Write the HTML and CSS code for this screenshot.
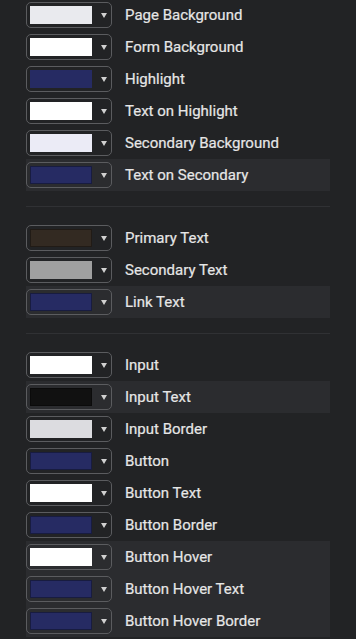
FILE: index.html
```html
<!DOCTYPE html>
<html lang="en">
<head>
    <meta charset="UTF-8">
    <title>Colors</title>
    <link rel="stylesheet" href="styles.css">
</head>
<body>
<div class="panel">
    <div class="group">
        <div class="row"><div class="picker"><span class="swatch" style="background:#e9eaee"></span><span class="caret"></span></div><span class="label">Page Background</span></div>
        <div class="row"><div class="picker"><span class="swatch" style="background:#ffffff"></span><span class="caret"></span></div><span class="label">Form Background</span></div>
        <div class="row"><div class="picker"><span class="swatch" style="background:#262b63"></span><span class="caret"></span></div><span class="label">Highlight</span></div>
        <div class="row"><div class="picker"><span class="swatch" style="background:#ffffff"></span><span class="caret"></span></div><span class="label">Text on Highlight</span></div>
        <div class="row"><div class="picker"><span class="swatch" style="background:#ebebf6"></span><span class="caret"></span></div><span class="label">Secondary Background</span></div>
        <div class="row active"><div class="picker"><span class="swatch edged" style="background:#262b63"></span><span class="caret"></span></div><span class="label">Text on Secondary</span></div>
    </div>
    <hr class="sep">
    <div class="group">
        <div class="row"><div class="picker"><span class="swatch edged" style="background:#332a22"></span><span class="caret"></span></div><span class="label">Primary Text</span></div>
        <div class="row"><div class="picker"><span class="swatch" style="background:#a0a0a0"></span><span class="caret"></span></div><span class="label">Secondary Text</span></div>
        <div class="row active"><div class="picker"><span class="swatch edged" style="background:#262b63"></span><span class="caret"></span></div><span class="label">Link Text</span></div>
    </div>
    <hr class="sep">
    <div class="group">
        <div class="row"><div class="picker"><span class="swatch" style="background:#ffffff"></span><span class="caret"></span></div><span class="label">Input</span></div>
        <div class="row active"><div class="picker"><span class="swatch edged" style="background:#111111"></span><span class="caret"></span></div><span class="label">Input Text</span></div>
        <div class="row"><div class="picker"><span class="swatch" style="background:#dcdce0"></span><span class="caret"></span></div><span class="label">Input Border</span></div>
        <div class="row"><div class="picker"><span class="swatch edged" style="background:#262b63"></span><span class="caret"></span></div><span class="label">Button</span></div>
        <div class="row"><div class="picker"><span class="swatch" style="background:#ffffff"></span><span class="caret"></span></div><span class="label">Button Text</span></div>
        <div class="row"><div class="picker"><span class="swatch edged" style="background:#262b63"></span><span class="caret"></span></div><span class="label">Button Border</span></div>
        <div class="row active"><div class="picker"><span class="swatch" style="background:#ffffff"></span><span class="caret"></span></div><span class="label">Button Hover</span></div>
        <div class="row active"><div class="picker"><span class="swatch edged" style="background:#262b63"></span><span class="caret"></span></div><span class="label">Button Hover Text</span></div>
        <div class="row active"><div class="picker"><span class="swatch edged" style="background:#262b63"></span><span class="caret"></span></div><span class="label">Button Hover Border</span></div>
    </div>
</div>
</body>
</html>
```

FILE: styles.css
```css
html, body{
    margin: 0;
    background-color: #222325;
}
.panel{
    width: 304px;
    margin: -1px 0 0 26px;
    font-family: Roboto, "Liberation Sans", Arial, sans-serif;
}
.row{
    display: flex;
    align-items: center;
    gap: 13px;
    height: 32px;
}
.row.active{
    background-color: #2b2c2f;
}
.picker{
    box-sizing: border-box;
    display: flex;
    align-items: center;
    gap: 8px;
    width: 86px;
    height: 26px;
    padding: 3px;
    border: 1px solid #5b5c5f;
    border-radius: 5px;
}
.swatch{
    box-sizing: border-box;
    width: 62px;
    height: 18px;
}
.swatch.edged{
    border: 1px solid rgba(0,0,0,0.35);
}
.caret{
    width: 0;
    height: 0;
    margin-left: 1px;
    border-left: 3px solid transparent;
    border-right: 3px solid transparent;
    border-top: 5px solid #d0d0d0;
}
.label{
    font-size: 15px;
    color: #e6e6e6;
    -webkit-text-stroke: 0.2px #e6e6e6;
}
.sep{
    height: 1px;
    margin: 15px 0;
    border: 0;
    background-color: #303134;
}
```
